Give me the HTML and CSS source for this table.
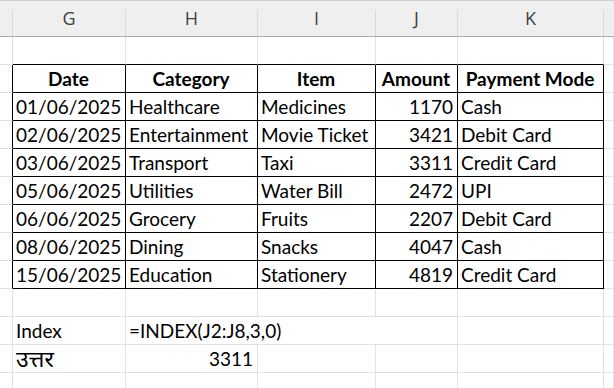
FILE: index.html
```html
<!DOCTYPE html>
<html>
<head>
<meta charset="utf-8">
<link rel="stylesheet" href="styles.css">
</head>
<body>
<div class="sheet">
  <div class="row hdr">
    <div class="c"></div><div class="c">G</div><div class="c">H</div><div class="c">I</div><div class="c">J</div><div class="c">K</div><div class="c"></div>
  </div>
  <div class="row">
    <div class="c"></div><div class="c tt"></div><div class="c tt"></div><div class="c tt"></div><div class="c tt"></div><div class="c tt"></div><div class="c"></div>
  </div>
  <div class="row">
    <div class="c tl"></div><div class="c t th">Date</div><div class="c t th">Category</div><div class="c t th">Item</div><div class="c t th">Amount</div><div class="c t th">Payment Mode</div><div class="c"></div>
  </div>
  <div class="row">
    <div class="c tl"></div><div class="c t">01/06/2025</div><div class="c t">Healthcare</div><div class="c t">Medicines</div><div class="c t num">1170</div><div class="c t">Cash</div><div class="c"></div>
  </div>
  <div class="row">
    <div class="c tl"></div><div class="c t">02/06/2025</div><div class="c t">Entertainment</div><div class="c t">Movie Ticket</div><div class="c t num">3421</div><div class="c t">Debit Card</div><div class="c"></div>
  </div>
  <div class="row">
    <div class="c tl"></div><div class="c t">03/06/2025</div><div class="c t">Transport</div><div class="c t">Taxi</div><div class="c t num">3311</div><div class="c t">Credit Card</div><div class="c"></div>
  </div>
  <div class="row">
    <div class="c tl"></div><div class="c t">05/06/2025</div><div class="c t">Utilities</div><div class="c t">Water Bill</div><div class="c t num">2472</div><div class="c t">UPI</div><div class="c"></div>
  </div>
  <div class="row">
    <div class="c tl"></div><div class="c t">06/06/2025</div><div class="c t">Grocery</div><div class="c t">Fruits</div><div class="c t num">2207</div><div class="c t">Debit Card</div><div class="c"></div>
  </div>
  <div class="row">
    <div class="c tl"></div><div class="c t">08/06/2025</div><div class="c t">Dining</div><div class="c t">Snacks</div><div class="c t num">4047</div><div class="c t">Cash</div><div class="c"></div>
  </div>
  <div class="row">
    <div class="c tl"></div><div class="c t">15/06/2025</div><div class="c t">Education</div><div class="c t">Stationery</div><div class="c t num">4819</div><div class="c t">Credit Card</div><div class="c"></div>
  </div>
  <div class="row">
    <div class="c"></div><div class="c"></div><div class="c"></div><div class="c"></div><div class="c"></div><div class="c"></div><div class="c"></div>
  </div>
  <div class="row">
    <div class="c"></div><div class="c">Index</div><div class="c span3">=INDEX(J2:J8,3,0)</div><div class="c"></div><div class="c"></div>
  </div>
  <div class="row">
    <div class="c"></div><div class="c deva">उत्तर</div><div class="c num">3311</div><div class="c"></div><div class="c"></div><div class="c"></div><div class="c"></div>
  </div>
  <div class="row">
    <div class="c"></div><div class="c"></div><div class="c"></div><div class="c"></div><div class="c"></div><div class="c"></div><div class="c"></div>
  </div>
</div>
</body>
</html>
```
FILE: styles.css
```css
html, body {
  margin: 0;
  padding: 0;
  background: #fff;
  overflow: hidden;
}
.sheet {
  width: 614px;
  font-family: "Lato", "Noto Sans Devanagari", "Lohit Devanagari", sans-serif;
  font-size: 19px;
  color: #000;
}
.row {
  display: grid;
  grid-template-columns: 13px 113px 132px 118px 82px 146px 10px;
  height: 28px;
}
.c {
  box-sizing: border-box;
  border-right: 1px solid #e1e1e1;
  border-bottom: 1px solid #e1e1e1;
  padding: 0 4px 0 3px;
  line-height: 27px;
  white-space: nowrap;
  overflow: hidden;
}
.hdr {
  height: 37px;
  box-sizing: border-box;
  border-top: 1px solid #d2d2d2;
  background: #efefef;
  font-family: "Open Sans", sans-serif;
  font-size: 18px;
  color: #404040;
}
.hdr .c {
  height: 36px;
  line-height: 35px;
  text-align: center;
  border-right: none;
  border-bottom: 1px solid #ababab;
  background-image: linear-gradient(#d9d9d9, #d9d9d9);
  background-size: 1px 26px;
  background-position: right bottom;
  background-repeat: no-repeat;
}
.hdr .c:last-child {
  background-image: none;
}
.tt {
  border-bottom-color: #000;
}
.tl {
  border-right-color: #000;
}
.t {
  border-right-color: #000;
  border-bottom-color: #000;
}
.th {
  font-weight: bold;
  text-align: center;
}
.num {
  text-align: right;
}
.span3 {
  grid-column: span 3;
  overflow: visible;
}
.deva {
  font-size: 23px;
  line-height: 26px;
}
```
